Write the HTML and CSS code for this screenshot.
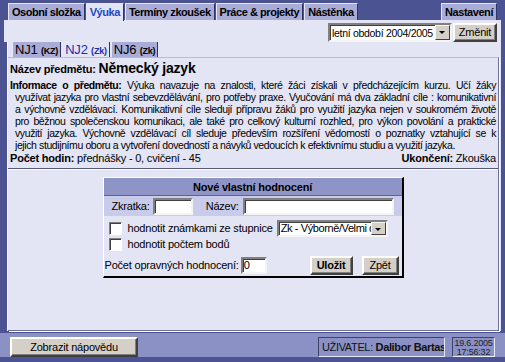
FILE: index.html
```html
<!DOCTYPE html>
<html lang="cs">

<head>
  <meta charset="UTF-8" />
  <title>Výuka</title>
  <link rel="stylesheet" href="styles.css">
</head>

<body>
  <div class="tabs">
    <div class="tab">Osobní složka</div>
    <div class="tab active">Výuka</div>
    <div class="tab">Termíny zkoušek</div>
    <div class="tab">Práce &amp; projekty</div>
    <div class="tab">Nástěnka</div>
    <div class="tab settings">Nastavení</div>
  </div>

  <div class="top">
    <div class="select period">
      <span class="select-text">letní období 2004/2005</span>
      <span class="select-arrow"></span>
    </div>
    <div class="button change">Změnit</div>
  </div>

  <div class="main">
    <div class="subtabs">
      <div class="subtab">NJ1 <small>(KZ)</small></div>
      <div class="subtab active">NJ2 <small>(Zk)</small></div>
      <div class="subtab">NJ6 <small>(Zk)</small></div>
    </div>

    <div class="content">
      <div class="info">
        <div class="subject"><b>Název předmětu:</b> <span class="subject-name">Německý jazyk</span></div>
        <p class="desc">
          <span class="line first"><b>Informace o předmětu:</b> Výuka navazuje na znalosti, které žáci získali v předcházejícím kurzu. Učí žáky</span>
          <span class="line">využívat jazyka pro vlastní sebevzdělávání, pro potřeby praxe. Vyučování má dva základní cíle : komunikativní</span>
          <span class="line">a výchovně vzdělávací. Komunikativní cíle sledují přípravu žáků pro využití jazyka nejen v soukromém životě</span>
          <span class="line">pro běžnou společenskou komunikaci, ale také pro celkový kulturní rozhled, pro výkon povolání a praktické</span>
          <span class="line">využití jazyka. Výchovně vzdělávací cíl sleduje především rozšíření vědomostí o poznatky vztahující se k</span>
          <span class="line last">jejich studijnímu oboru a vytvoření dovedností a návyků vedoucích k efektivnímu studiu a využití jazyka.</span>
        </p>
        <div class="hours">
          <span><b>Počet hodin:</b> přednášky - 0, cvičení - 45</span>
          <span><b>Ukončení:</b> Zkouška</span>
        </div>
      </div>

      <div class="form">
        <div class="form-head">Nové vlastní hodnocení</div>
        <div class="form-names">
          <label>Zkratka:</label>
          <span class="input short"></span>
          <label class="name-label">Název:</label>
          <span class="input long"></span>
        </div>
        <div class="form-check first">
          <span class="checkbox"></span>
          <span>hodnotit známkami ze stupnice</span>
          <div class="select scale">
            <span class="select-text">Zk - Výborně/Velmi d</span>
            <span class="select-arrow"></span>
          </div>
        </div>
        <div class="form-check">
          <span class="checkbox"></span>
          <span>hodnotit počtem bodů</span>
        </div>
        <div class="form-foot">
          <label>Počet opravných hodnocení:</label>
          <span class="input tiny">0</span>
          <div class="button save">Uložit</div>
          <div class="button back">Zpět</div>
        </div>
      </div>
    </div>
  </div>

  <div class="statusbar">
    <div class="button help">Zobrazit nápovědu</div>
    <div class="user">UŽIVATEL: <b>Dalibor Bartas</b></div>
    <div class="clock">19.6.2005<br>17:56:32</div>
  </div>
</body>

</html>
```

FILE: styles.css
```css
* {
  box-sizing: border-box;
}

html,
body {
  margin: 0;
  padding: 0;
  width: 505px;
  height: 362px;
  overflow: hidden;
  background: #4b5393;
  font-family: "Liberation Sans", Arial, sans-serif;
  font-size: 11px;
  letter-spacing: -0.2px;
  color: #000;
}

/* top tabs */
.tabs {
  display: flex;
  height: 20px;
  padding: 3px 4px 0 8px;
}

.tab {
  height: 17px;
  line-height: 16px;
  padding: 0 3px;
  margin-right: 1px;
  background: #a9acd6;
  border-left: 1px solid #e6e7f6;
  border-top: 1px solid #e6e7f6;
  border-right: 1px solid #2e3468;
  font-weight: bold;
  font-size: 11px;
  letter-spacing: -0.45px;
  white-space: nowrap;
}

.tab.active {
  background: #e3e4f4;
  color: #2248c4;
  height: 18px;
}

.tab.settings {
  margin-left: auto;
  margin-right: 4px;
}

/* period chooser */
.top {
  display: flex;
  justify-content: flex-end;
  align-items: flex-start;
  height: 22px;
  margin: 0 4px;
  padding: 3px 4px 0 0;
  background: #e3e4f4;
}

.select {
  display: flex;
  height: 19px;
  background: #fff;
  border: 2px solid;
  border-color: #808080 #f4f4f4 #f4f4f4 #808080;
  box-shadow: inset 1px 1px 0 #404040;
}

.select-text {
  flex: 1;
  padding: 2px 0 0 2px;
  font-size: 10.5px;
  letter-spacing: -0.3px;
  white-space: nowrap;
  overflow: hidden;
}

.select-arrow {
  flex: none;
  width: 15px;
  height: 15px;
  background: #d4d0c8;
  border: 1px solid;
  border-color: #f4f4f4 #404040 #404040 #f4f4f4;
  position: relative;
}

.select-arrow::after {
  content: "";
  position: absolute;
  left: 3px;
  top: 5px;
  border-left: 3px solid transparent;
  border-right: 3px solid transparent;
  border-top: 3px solid #000;
}

.period {
  width: 124px;
}

.button {
  background: #d4d0c8;
  border: 2px solid;
  border-color: #fff #404040 #404040 #fff;
  box-shadow: inset -1px -1px 0 #808080;
  text-align: center;
  line-height: 15px;
  white-space: nowrap;
}

.change {
  width: 44px;
  height: 19px;
  margin-left: 1px;
}

/* main frame */
.main {
  height: 289px;
  margin: 0 4px 0 7px;
  background: #e3e4f4;
  border-left: 1px solid #f6f6fc;
}

.subtabs {
  display: flex;
  height: 15px;
  padding-left: 4px;
}

.subtab {
  height: 15px;
  line-height: 15px;
  padding: 0 2px;
  margin-right: 1px;
  background: #a9acd6;
  border-left: 1px solid #e6e7f6;
  border-right: 1px solid #2e3468;
  font-size: 13px;
}

.subtab small {
  font-size: 9px;
  font-weight: bold;
}

.subtab.active {
  background: #e3e4f4;
  color: #1a2fa8;
}

.content {
  height: 274px;
  margin-right: 2px;
  border-top: 1px solid #b9bbd2;
  border-right: 1px solid #6c709a;
  border-bottom: 1px solid #6c709a;
  box-shadow: 1px 1px 0 #fff;
}

.info {
  padding: 2px 2px 3px 2px;
  border-bottom: 1px solid #55597c;
  box-shadow: 0 1px 0 #fff;
}

.subject {
  height: 17px;
  line-height: 17px;
}

.subject-name {
  font-size: 14px;
  font-weight: bold;
}

/* description keeps the original line breaks */
.desc {
  margin: 2px 0 0 0;
  font-size: 10.5px;
  line-height: 12px;
  letter-spacing: -0.4px;
}

.line {
  display: block;
  padding-left: 5px;
  white-space: nowrap;
  text-align: justify;
  text-align-last: justify;
}

.line.first {
  padding-left: 0;
}

.line.last {
  text-align-last: left;
}

.hours {
  display: flex;
  justify-content: space-between;
  line-height: 13px;
  margin-top: 1px;
}

/* new evaluation form */
.form {
  width: 301px;
  margin: 8px auto 0;
  border-left: 1px solid #fff;
  border-top: 1px solid #fff;
  border-right: 2px solid #000;
  border-bottom: 2px solid #000;
}

.form-head {
  height: 18px;
  line-height: 18px;
  background: #8f94c6;
  border-bottom: 1px solid #5d6296;
  text-align: center;
  font-weight: bold;
}

.form-names {
  display: flex;
  align-items: center;
  height: 20px;
  padding-left: 8px;
  background: #c9cbea;
}

.input {
  display: inline-block;
  height: 17px;
  background: #fff;
  border: 2px solid;
  border-color: #808080 #f4f4f4 #f4f4f4 #808080;
  box-shadow: inset 1px 1px 0 #404040;
  line-height: 13px;
  padding-left: 1px;
}

.short {
  width: 40px;
  margin-left: 3px;
}

.name-label {
  margin-left: 13px;
  margin-right: 4px;
}

.long {
  width: 151px;
}

.form-check {
  display: flex;
  align-items: center;
  gap: 6px;
  height: 16px;
  padding-left: 5px;
}

.form-check.first {
  margin-top: 4px;
}

.checkbox {
  flex: none;
  width: 13px;
  height: 13px;
  background: #fff;
  border: 1px solid;
  border-color: #808080 #fff #fff #808080;
  box-shadow: inset 1px 1px 0 #404040;
}

.scale {
  width: 111px;
  margin-left: -2px;
  height: 17px;
}

.scale .select-text {
  padding-top: 0;
  line-height: 13px;
  font-size: 11px;
  letter-spacing: -0.4px;
}

.scale .select-arrow {
  height: 13px;
}

.form-foot {
  display: flex;
  align-items: center;
  height: 22px;
  padding-left: 1px;
  margin-top: 2px;
}

.tiny {
  width: 26px;
  margin-left: 2px;
}

.save {
  width: 43px;
  height: 19px;
  margin-left: auto;
  font-weight: bold;
}

.back {
  width: 37px;
  height: 19px;
  margin: 0 3px 0 9px;
}

/* status bar */
.statusbar {
  display: flex;
  align-items: flex-start;
  height: 24px;
  margin-top: 2px;
  padding: 4px 0 0 10px;
  background: #8b91c5;
}

.help {
  width: 128px;
  height: 20px;
  line-height: 16px;
}

.user {
  width: 127px;
  height: 20px;
  margin-left: auto;
  padding-left: 3px;
  line-height: 18px;
  letter-spacing: -0.35px;
  white-space: nowrap;
  overflow: hidden;
  color: #111;
  border: 1px solid;
  border-color: #3c416e #e8e9f6 #e8e9f6 #3c416e;
}

.clock {
  width: 43px;
  height: 20px;
  margin: 0 10px 0 7px;
  padding-top: 1px;
  font-size: 9px;
  line-height: 9px;
  text-align: center;
  color: #222;
  border: 1px solid;
  border-color: #3c416e #e8e9f6 #e8e9f6 #3c416e;
}
```
